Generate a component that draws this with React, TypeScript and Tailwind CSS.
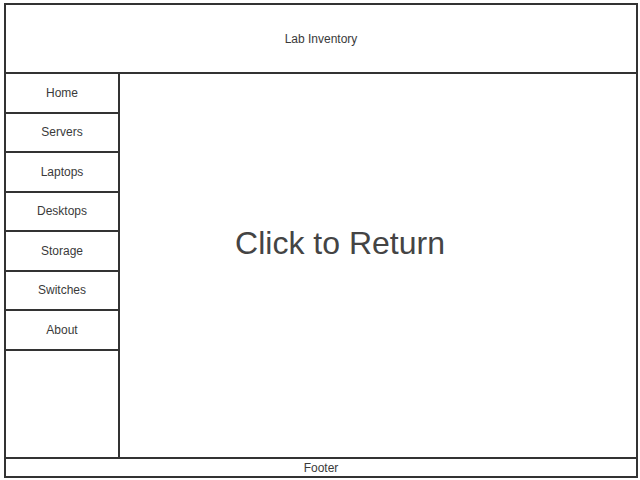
const menuItems = ["Home", "Servers", "Laptops", "Desktops", "Storage", "Switches", "About"];

export default function App() {
  return (
    <div className="w-[640px] h-[480px] bg-white pt-[3px] pl-[4px] font-['Liberation_Sans',Arial,sans-serif] text-[#3a3a3a]">
      <div className="w-[634px] h-[475px] border-2 border-[#333] flex flex-col">
        <header className="h-[69px] shrink-0 border-b-2 border-[#333] flex items-center justify-center text-[12px]">
          Lab Inventory
        </header>
        <div className="flex h-[383px] shrink-0">
          <nav className="w-[114px] shrink-0 border-r-2 border-[#333] flex flex-col">
            {menuItems.map((item) => (
              <div
                key={item}
                className="h-[39.5px] shrink-0 border-b-2 border-[#333] flex items-center justify-center text-[12px]"
              >
                {item}
              </div>
            ))}
          </nav>
          <main className="flex-1 flex items-center justify-center pr-[76px] pb-[46px]">
            <span className="text-[32px] text-[#444] cursor-pointer">Click to Return</span>
          </main>
        </div>
        <footer className="h-[19px] shrink-0 border-t-2 border-[#333] flex items-center justify-center text-[12px]">
          Footer
        </footer>
      </div>
    </div>
  );
}
